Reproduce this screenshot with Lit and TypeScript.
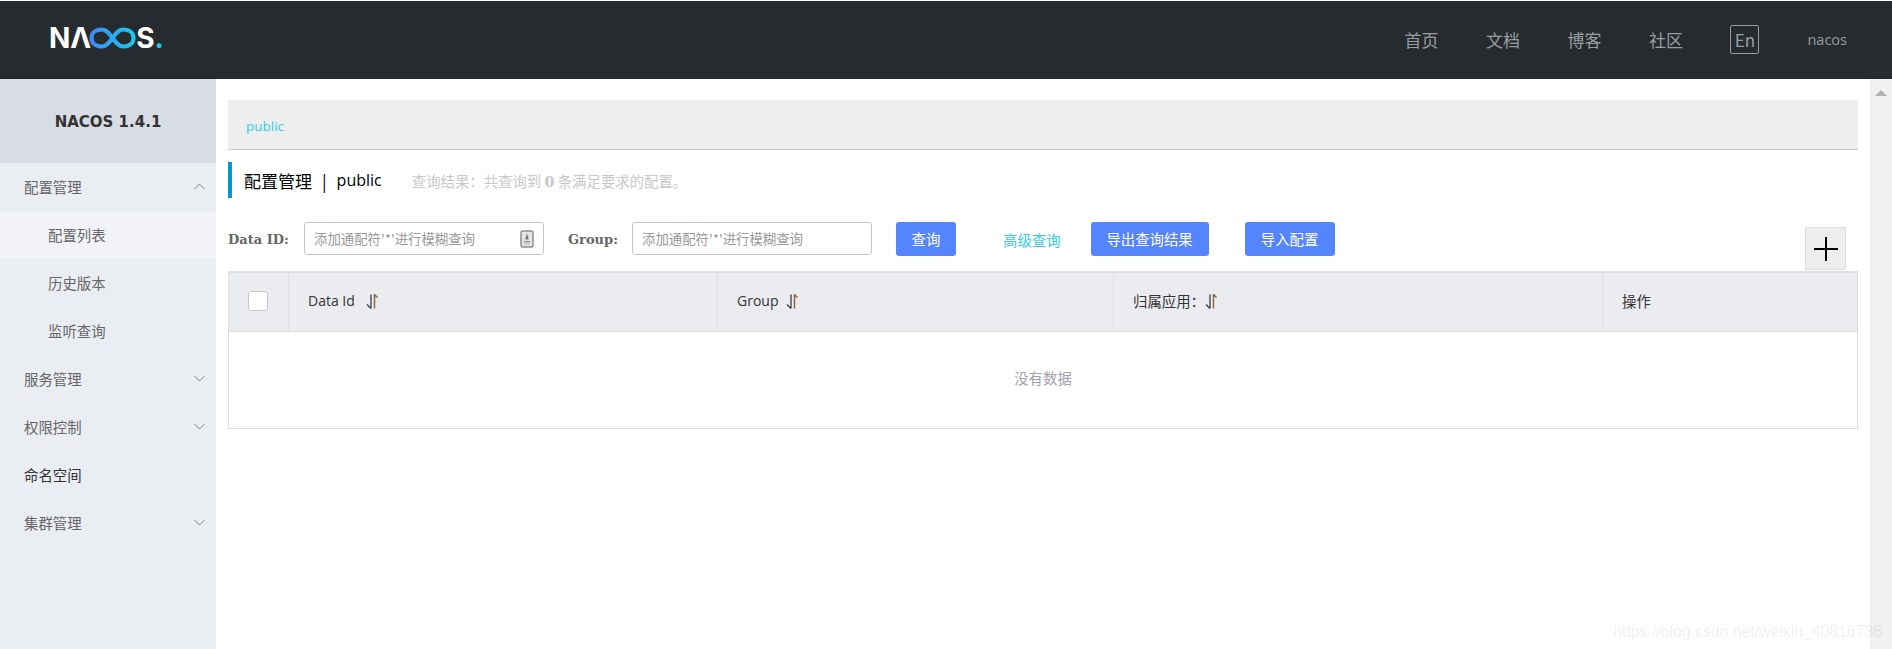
import { LitElement, html, css, svg } from "lit";
import { customElement } from "lit/decorators.js";

const chevron = (up: boolean) => html`<svg class="chev" width="11" height="7" viewBox="0 0 11 7">
  <path d=${up ? "M.5 6 5.500 1l5 5" : "M.5 1l5 5 5-5"} fill="none" stroke="#7d8288" stroke-width="1"></path>
</svg>`;

const sortIcon = html`<svg class="sort" width="12" height="15" viewBox="0 0 12 15">
  <path d="M5 .5V14.500M1 10.500l4 4" fill="none" stroke="#3a4048" stroke-width="1.300"></path>
  <path d="M8.500 14.500V.5l3 3" fill="none" stroke="#8a6a40" stroke-width="1.500"></path>
</svg>`;

const infinity = svg`<defs><linearGradient id="inf" x1="0" x2="1" y1="0" y2="0">
  <stop offset="0" stop-color="#3d8bf5"></stop><stop offset="1" stop-color="#1fc8e8"></stop>
</linearGradient></defs>
<path d="M13 2.500C6 2.500 2.500 6.500 2.500 11S6 19.500 13 19.500c9 0 12-17 21-17 7 0 10.500 4 10.500 8.500s-3.500 8.500-10.500 8.500c-9 0-12-17-21-17z" fill="none" stroke="url(#inf)" stroke-width="4.200"></path>`;

@customElement("app-root")
export class AppRoot extends LitElement {
  static styles = css`
    :host {
      display: block;
      height: 649px;
      overflow: hidden;
      font-family: "Noto Sans CJK SC", "Noto Sans", sans-serif;
      font-size: 14.4px;
      color: #333;
      background: #fff;
      position: relative;
    }
    .header {
      height: 78px;
      margin-top: 1px;
      background: #262b30;
      display: flex;
      align-items: center;
    }
    .logo {
      margin-left: 49px;
      padding-bottom: 4px;
      display: flex;
      align-items: center;
      font-family: Inter, sans-serif;
      font-weight: 700;
      font-size: 28px;
      color: #fff;
      line-height: 30px;
    }
    .logo svg {
      margin: 0 0 0 -2px;
    }
    .logo .dot {
      color: #1fc8e8;
    }
    .nav {
      margin-left: auto;
      margin-right: 45px;
      padding-bottom: 2px;
      display: flex;
      align-items: center;
      color: #9a9d9f;
      font-size: 17px;
    }
    .nav a {
      width: 34px;
      margin-right: 47.5px;
      white-space: nowrap;
    }
    .lang {
      width: 29px;
      height: 29px;
      box-sizing: border-box;
      border: 1px solid #9a9d9f;
      border-radius: 2px;
      display: flex;
      align-items: center;
      justify-content: center;
      font-size: 17px;
      margin-right: 48px;
    }
    .user {
      font-size: 14.5px;
      font-family: "Open Sans", sans-serif;
    }
    .main {
      display: flex;
      height: 570px;
    }
    .side {
      width: 216px;
      flex: none;
      background: #eaedf1;
      color: #666;
    }
    .side-title {
      height: 84px;
      box-sizing: border-box;
      padding-top: 2px;
      background: #d8dce5;
      display: flex;
      align-items: center;
      justify-content: center;
      font-family: "DejaVu Sans", sans-serif;
      font-weight: 700;
      font-size: 15px;
      color: #333;
    }
    .item {
      height: 48px;
      box-sizing: border-box;
      display: flex;
      align-items: center;
      padding: 0 11px 2px 24px;
    }
    .item.sub {
      padding-left: 48px;
    }
    .item.active {
      background: #f2f3f7;
    }
    .item.dark {
      color: #333;
    }
    .chev {
      margin-left: auto;
    }
    .content {
      flex: 1;
      min-width: 0;
      padding: 21px 12px 0;
    }
    .crumb {
      height: 50px;
      box-sizing: border-box;
      background: #eee;
      border-bottom: 1px solid #ccc;
      display: flex;
      align-items: center;
      padding: 2px 0 0 18px;
      color: #33cde5;
      font-size: 13.5px;
      font-family: "Open Sans", sans-serif;
    }
    .title {
      margin-top: 12px;
      height: 36px;
      box-sizing: border-box;
      display: flex;
      align-items: center;
      border-left: 4px solid #09c;
      padding-left: 12px;
      font-size: 17px;
      color: #000;
      white-space: pre;
    }
    .title .sep {
      margin: 0 10px;
    }
    .title .ns {
      font-family: "Open Sans", sans-serif;
      font-size: 16px;
    }
    .result {
      margin-left: 30px;
      font-size: 14.4px;
      color: #c8c8c8;
    }
    .result b {
      font-family: "DejaVu Serif", serif;
    }
    .toolbar {
      display: flex;
      align-items: flex-start;
      padding-top: 24px;
      height: 73px;
      box-sizing: border-box;
    }
    .label {
      height: 34px;
      display: flex;
      align-items: center;
      font-family: "DejaVu Serif", serif;
      font-weight: 700;
      font-size: 13px;
      color: #666;
      white-space: nowrap;
    }
    .label.data {
      width: 76px;
    }
    .label.group {
      width: 64px;
      margin-left: 24px;
    }
    .input {
      width: 240px;
      height: 33px;
      box-sizing: border-box;
      border: 1px solid #c4c6cf;
      border-radius: 3px;
      display: flex;
      align-items: center;
      padding: 0 9px 1px;
      font-size: 13.4px;
      color: #999;
      white-space: nowrap;
    }
    .input svg {
      margin: 1px 0 0 auto;
    }
    .btn {
      height: 34px;
      box-sizing: border-box;
      padding-bottom: 2px;
      background: #5584ff;
      color: #fff;
      border-radius: 3px;
      display: flex;
      align-items: center;
      justify-content: center;
      white-space: nowrap;
    }
    .btn.query {
      width: 60px;
      margin-left: 24px;
    }
    .btn.export {
      width: 118px;
      margin-left: 30px;
    }
    .btn.import {
      width: 90px;
      margin-left: 36px;
    }
    .link {
      height: 34px;
      margin-left: 47px;
      display: flex;
      align-items: center;
      color: #33cde5;
      white-space: nowrap;
    }
    .plus {
      width: 41px;
      height: 43px;
      box-sizing: border-box;
      margin-top: 5px;
      background: #eee;
      border: 1px solid #ddd;
      display: flex;
      align-items: center;
      justify-content: center;
      margin-left: auto;
      margin-right: 12px;
    }
    .table {
      border: 1px solid #dcdee3;
      border-top-width: 2px;
    }
    .thead {
      display: grid;
      grid-template-columns: 60px 429px 396px 489px 1fr;
      height: 58px;
      background: #ebecf0;
      border-bottom: 1px solid #dcdee3;
      color: #333;
    }
    .th {
      display: flex;
      align-items: center;
      padding: 0 0 3px 19px;
      border-right: 1px solid #dcdee3;
      white-space: pre;
    }
    .th:first-child {
      padding-bottom: 2px;
    }
    .th:last-child {
      border-right: none;
    }
    .th.name {
      font-family: "Open Sans", sans-serif;
      font-size: 14px;
    }
    .th .sort {
      margin: 2px 0 0 11px;
    }
    .th.group .sort {
      margin-left: 8px;
    }
    .th.app .sort {
      margin-left: 0;
    }
    .check {
      width: 20px;
      height: 20px;
      box-sizing: border-box;
      background: #fff;
      border: 1px solid #c4c6cf;
      border-radius: 3px;
    }
    .empty {
      height: 96px;
      box-sizing: border-box;
      padding-bottom: 5px;
      display: flex;
      align-items: center;
      justify-content: center;
      color: #a0a2ad;
    }
    .scroll {
      width: 22px;
      flex: none;
      background: #f1f1f1;
      display: flex;
      justify-content: center;
      padding-top: 11px;
      box-sizing: border-box;
    }
    .tri {
      width: 0;
      height: 0;
      border-left: 6px solid transparent;
      border-right: 6px solid transparent;
      border-bottom: 6px solid #b0b0b0;
    }
    .mark {
      position: absolute;
      right: 10px;
      bottom: 8px;
      font-family: "Liberation Sans", sans-serif;
      font-size: 15.8px;
      color: rgba(0, 0, 0, 0.08);
      white-space: nowrap;
    }
  `;

  private bookIcon() {
    return html`<svg width="14" height="18" viewBox="0 0 14 18">
      <rect x="1" y="1" width="12" height="16" rx="1.500" fill="#e4e4e4" stroke="#8f8f8f" stroke-width="1.500"></rect>
      <path d="M7 3.500 8.500 8v1.500h-3V8z" fill="#777"></path>
      <rect x="4" y="11" width="6" height="1.500" fill="#999"></rect>
      <rect x="4" y="13.500" width="6" height="1" fill="#bbb"></rect>
    </svg>`;
  }

  render() {
    return html`
      <div class="header">
        <div class="logo">
          <span>NΛ</span>
          <svg width="47" height="22" viewBox="0 0 47 22">${infinity}</svg>
          <span>S<span class="dot">.</span></span>
        </div>
        <div class="nav">
          <a>首页</a><a>文档</a><a>博客</a><a>社区</a>
          <div class="lang">En</div>
          <div class="user">nacos</div>
        </div>
      </div>
      <div class="main">
        <div class="side">
          <div class="side-title">NACOS 1.4.1</div>
          <div class="item">配置管理${chevron(true)}</div>
          <div class="item sub active">配置列表</div>
          <div class="item sub">历史版本</div>
          <div class="item sub">监听查询</div>
          <div class="item">服务管理${chevron(false)}</div>
          <div class="item">权限控制${chevron(false)}</div>
          <div class="item dark">命名空间</div>
          <div class="item">集群管理${chevron(false)}</div>
        </div>
        <div class="content">
          <div class="crumb">public</div>
          <div class="title">配置管理<span class="sep">|</span><span class="ns">public</span><span class="result">查询结果：共查询到 <b>0</b> 条满足要求的配置。</span></div>
          <div class="toolbar">
            <div class="label data">Data ID:</div>
            <div class="input">添加通配符'*'进行模糊查询${this.bookIcon()}</div>
            <div class="label group">Group:</div>
            <div class="input">添加通配符'*'进行模糊查询</div>
            <div class="btn query">查询</div>
            <div class="link">高级查询</div>
            <div class="btn export">导出查询结果</div>
            <div class="btn import">导入配置</div>
            <div class="plus">
              <svg width="24" height="24" viewBox="0 0 24 24"><path d="M0 12h24M12 0v24" stroke="#000" stroke-width="2" fill="none"></path></svg>
            </div>
          </div>
          <div class="table">
            <div class="thead">
              <div class="th"><div class="check"></div></div>
              <div class="th name">Data Id${sortIcon}</div>
              <div class="th name group">Group${sortIcon}</div>
              <div class="th app">归属应用：${sortIcon}</div>
              <div class="th">操作</div>
            </div>
            <div class="empty">没有数据</div>
          </div>
        </div>
        <div class="scroll"><div class="tri"></div></div>
      </div>
      <div class="mark">https://blog.csdn.net/weixin_40816738</div>
    `;
  }
}
